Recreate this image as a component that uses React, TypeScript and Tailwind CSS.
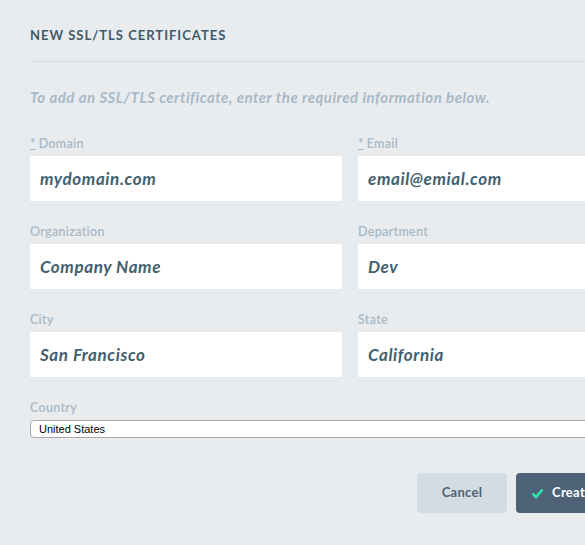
import React from "react";

const Field = ({ label, value, required }: { label: string; value: string; required?: boolean }) => (
  <div className="flex flex-col w-[312px]">
    <div className="h-[16px] leading-[16px] text-[12.5px] tracking-[0.3px] font-semibold text-[#a9b8c5]">
      {required && <span className="underline mr-[3px]">*</span>}
      {label}
    </div>
    <div className="mt-[4px] h-[45px] bg-white flex items-center pl-[10px] text-[17px] tracking-[0.6px] italic font-bold text-[#41606f]">
      {value}
    </div>
  </div>
);

export default function App() {
  return (
    <div
      className="w-[585px] h-[545px] overflow-hidden bg-[#e8ecef]"
      style={{ fontFamily: "Lato, 'Open Sans', sans-serif" }}
    >
      <div className="w-[720px] pl-[30px]">
        <div className="pt-[27px] pb-[18px] border-b border-[#d4dbe0] text-[13px] leading-[16px] font-bold tracking-[1px] text-[#3f5a6b]">
          NEW SSL/TLS CERTIFICATES
        </div>
        <div className="mt-[25px] text-[15px] leading-[20px] tracking-[0.5px] italic font-bold text-[#a9b9c7]">
          To add an SSL/TLS certificate, enter the required information below.
        </div>
        <div className="mt-[29px] flex flex-col gap-[23px]">
          <div className="flex gap-[16px]">
            <Field label="Domain" value="mydomain.com" required />
            <Field label="Email" value="email@emial.com" required />
          </div>
          <div className="flex gap-[16px]">
            <Field label="Organization" value="Company Name" />
            <Field label="Department" value="Dev" />
          </div>
          <div className="flex gap-[16px]">
            <Field label="City" value="San Francisco" />
            <Field label="State" value="California" />
          </div>
          <div className="flex flex-col w-[642px]">
            <div className="h-[16px] leading-[16px] text-[12.5px] tracking-[0.3px] font-semibold text-[#a9b8c5]">Country</div>
            <div
              className="mt-[4px] h-[18px] bg-white border border-[#a9a9a9] rounded-[4px] flex items-center pl-[8px] text-[11px] text-black"
              style={{ fontFamily: "'Liberation Sans', Arial, sans-serif" }}
            >
              United States
            </div>
          </div>
        </div>
        <div className="mt-[35px] flex gap-[9px] pl-[387px]">
          <div className="w-[90px] h-[40px] rounded-[4px] bg-[#d3dce3] flex items-center justify-center text-[13px] tracking-[0.3px] font-bold text-[#4d6272]">
            Cancel
          </div>
          <div className="w-[110px] h-[40px] rounded-[4px] bg-[#4d6276] flex items-center pl-[15px] text-[13px] tracking-[0.3px] font-bold text-white">
            <svg width="13" height="11" viewBox="0 0 13 11" className="mr-[8px]">
              <path d="M1.5 5.5 L5 9 L11.5 1.5" fill="none" stroke="#2fe3a6" strokeWidth="2.6" />
            </svg>
            Create
          </div>
        </div>
      </div>
    </div>
  );
}
